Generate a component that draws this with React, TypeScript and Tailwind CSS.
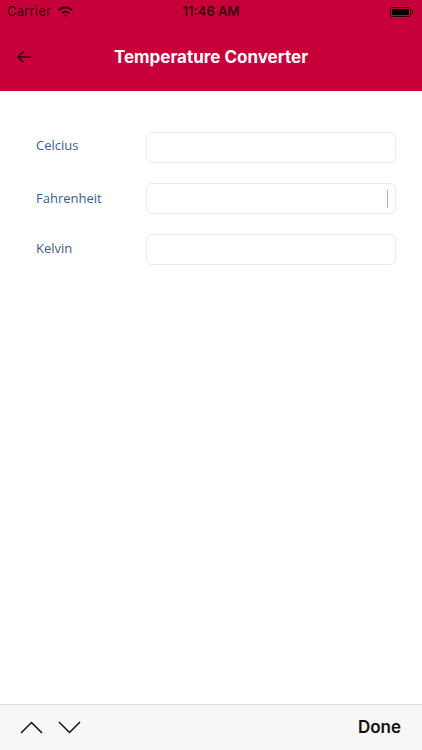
import React from "react";

export default function App() {
  const font = { fontFamily: '"Open Sans", "Liberation Sans", sans-serif' };
  const rows = [
    { label: "Celcius", cursor: false, cls: "mt-[-4px]" },
    { label: "Fahrenheit", cursor: true, cls: "mt-[0px]" },
    { label: "Kelvin", cursor: false, cls: "mt-[-1px]" },
  ];
  return (
    <div className="w-[422px] h-[750px] bg-white flex flex-col overflow-hidden" style={{ fontFamily: '"Inter", "Liberation Sans", sans-serif' }}>
      <div className="bg-[#c8003a] h-[91px] flex flex-col">
        <div className="h-[22px] relative flex items-center px-[7px] pt-[1px]">
          <span className="text-[13px] text-[#3a0010] tracking-[0.2px]">Carrier</span>
          <svg width="17" height="12" viewBox="0 0 17 12" className="ml-[6px] mt-[-2px]">
            <path d="M1 4.2 A11 11 0 0 1 16 4.2 L14.4 5.9 A8.7 8.7 0 0 0 2.6 5.9 Z" fill="#3a0010" />
            <path d="M4.2 7.4 A6.3 6.3 0 0 1 12.8 7.4 L11.2 9 A4 4 0 0 0 5.8 9 Z" fill="#3a0010" />
            <path d="M6.9 10.3 A2.2 2.2 0 0 1 10.1 10.3 L8.5 12 Z" fill="#3a0010" />
          </svg>
          <span className="absolute left-0 right-0 text-center text-[13px] font-semibold text-[#3a0010] pointer-events-none">11:46 AM</span>
          <div className="ml-auto flex items-center mr-[2px]">
            <div className="w-[21px] h-[10px] rounded-[2px] border border-[#3a0010] p-[1px]">
              <div className="w-full h-full bg-black rounded-[1px]" />
            </div>
            <div className="w-[1.5px] h-[4px] bg-[#3a0010] ml-[1px] rounded-r-sm" />
          </div>
        </div>
        <div className="flex-1 relative flex items-center">
          <svg width="16" height="14" viewBox="0 0 16 14" className="ml-[16px] mt-[1px]">
            <path d="M15 7 H2 M7.5 1.5 L2 7 L7.5 12.5" stroke="#3a0010" strokeWidth="1.6" fill="none" />
          </svg>
          <span className="absolute left-0 right-0 text-center text-white font-bold text-[17px] mt-[2px]">Temperature Converter</span>
        </div>
      </div>
      <div className="flex-1 flex flex-col pt-[41px] gap-[20px]">
        {rows.map((r) => (
          <div key={r.label} className="flex items-center pl-[36px] pr-[26px]">
            <span className={"w-[110px] text-[13px] text-[#3d5a8a] " + r.cls} style={font}>{r.label}</span>
            <div className="flex-1 h-[31px] rounded-[6px] border border-[#ebebef] flex items-center justify-end pr-[7px]">
              {r.cursor && <div className="w-[1px] h-[18px] bg-[#9fb3d0]" />}
            </div>
          </div>
        ))}
      </div>
      <div className="h-[46px] bg-[#f7f7f7] border-t border-[#dcdcdc] flex items-center px-[20px]">
        <svg width="23" height="13" viewBox="0 0 23 13">
          <path d="M1 12 L11.5 1.5 L22 12" stroke="#111" strokeWidth="1.5" fill="none" />
        </svg>
        <svg width="23" height="13" viewBox="0 0 23 13" className="ml-[15px]">
          <path d="M1 1 L11.5 11.5 L22 1" stroke="#111" strokeWidth="1.5" fill="none" />
        </svg>
        <span className="ml-auto text-[17px] font-semibold text-[#111] mr-[1px]">Done</span>
      </div>
    </div>
  );
}
